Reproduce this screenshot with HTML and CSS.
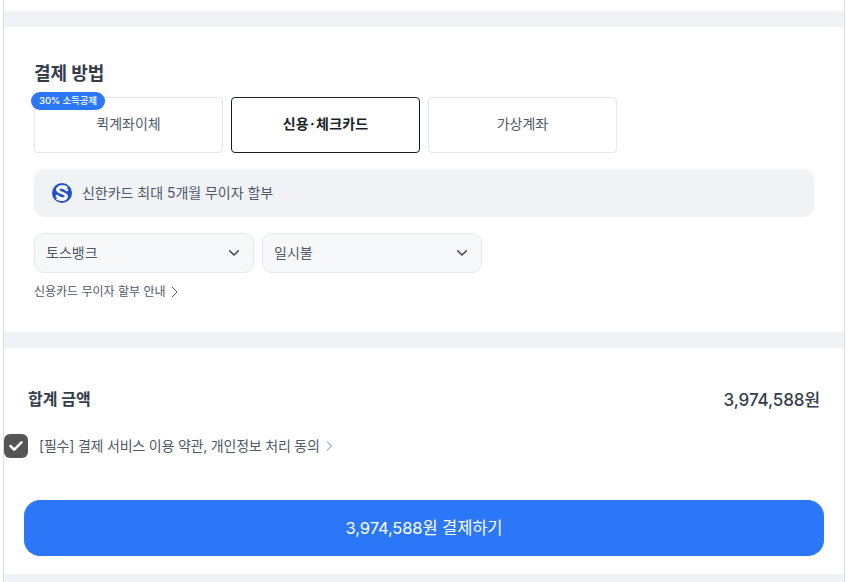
FILE: index.html
```html
<!DOCTYPE html>
<html lang="ko">
<head>
<meta charset="utf-8">
<title>결제 방법</title>
<link rel="stylesheet" href="styles.css">
</head>
<body>
<main class="frame">
  <div class="top-strip"></div>
  <section class="method">
    <h2 class="method-title">결제 방법</h2>
    <div class="tabs">
      <button class="tab">퀵계좌이체<span class="badge">30% 소득공제</span></button>
      <button class="tab tab-active">신용&#8202;·&#8202;체크카드</button>
      <button class="tab">가상계좌</button>
    </div>
    <div class="notice">
      <svg class="notice-icon" viewBox="0 0 20 20" width="20" height="20" aria-hidden="true">
        <circle cx="10" cy="10" r="10" fill="#2251c9"/>
        <path d="M16 3.800C13.500 1.800 8.200 1.500 5.600 3.700 3.200 5.800 3.800 8.400 6.400 9.800l5.500 2.500c1 .5 1 1.400.1 1.800-1.500.6-3.500 0-4.800-1.100l-3.300 3.300c2.600 2.100 8 2.400 10.500.2 2.400-2.100 1.800-5-.8-6.300L8.200 7.800c-1-.5-1-1.300-.1-1.800 1.400-.6 3.300-.1 4.500.9z" fill="#fff"/>
        <circle cx="14.800" cy="6.800" r="1.500" fill="#fff"/>
        <circle cx="5.200" cy="13.200" r="1.500" fill="#fff"/>
      </svg>
      <span class="lift">신한카드 최대 5개월 무이자 할부</span>
    </div>
    <div class="selects">
      <div class="select"><span class="lift">토스뱅크</span>
        <svg class="chevron" viewBox="0 0 10 6" width="10" height="6" aria-hidden="true"><path d="M.7.700L5 5l4.300-4.300" fill="none" stroke="#333d4b" stroke-width="1.400" stroke-linecap="round" stroke-linejoin="round"/></svg>
      </div>
      <div class="select"><span class="lift">일시불</span>
        <svg class="chevron" viewBox="0 0 10 6" width="10" height="6" aria-hidden="true"><path d="M.7.700L5 5l4.300-4.300" fill="none" stroke="#333d4b" stroke-width="1.400" stroke-linecap="round" stroke-linejoin="round"/></svg>
      </div>
    </div>
    <a class="guide"><span class="lift">신용카드 무이자 할부 안내</span>
      <svg viewBox="0 0 7 12" width="7" height="12" aria-hidden="true"><path d="M1 1l5 5-5 5" fill="none" stroke="#4e5968" stroke-width="1"/></svg>
    </a>
  </section>
  <section class="summary">
    <div class="total">
      <strong class="total-label">합계 금액</strong>
      <span class="total-value">3,974,588원</span>
    </div>
    <div class="agree">
      <span class="check">
        <svg viewBox="0 0 14 12" width="14" height="12" aria-hidden="true"><path d="M1.500 6l3.700 3.700 7.300-7.400" fill="none" stroke="#fff" stroke-width="2.500" stroke-linecap="round" stroke-linejoin="round"/></svg>
      </span>
      <span class="agree-text lift">[필수] 결제 서비스 이용 약관, 개인정보 처리 동의</span>
      <svg viewBox="0 0 7 12" width="7" height="12" aria-hidden="true"><path d="M1 1.500l4.500 4.500-4.500 4.500" fill="none" stroke="#adb5bd" stroke-width="1.300"/></svg>
    </div>
    <button class="pay">3,974,588원 결제하기</button>
  </section>
</main>
</body>
</html>
```
FILE: styles.css
```css
* { box-sizing: border-box; }
html, body { margin: 0; padding: 0; background: #fff; }
body {
  height: 582px;
  overflow: hidden;
  font-family: Inter, "Noto Sans CJK KR", sans-serif;
  color: #333d4b;
}
.frame {
  width: 842px;
  margin-left: 3px;
  height: 582px;
  border-left: 1px solid #d9dce3;
  border-right: 1px solid #d9dce3;
  background: #f0f2f6;
  display: flex;
  flex-direction: column;
  gap: 16px;
}
.top-strip { height: 11px; background: #fff; }
.lift { margin-bottom: 2px; }
.method {
  height: 305px;
  background: #fff;
  padding: 34px 30px 0;
}
.method-title {
  margin: 0;
  height: 26px;
  line-height: 26px;
  font-size: 18px;
  font-weight: 600;
  letter-spacing: -0.1px;
  color: #333d4b;
}
.tabs { display: flex; gap: 8px; margin-top: 10px; }
.tab {
  position: relative;
  width: 189px;
  height: 56px;
  padding: 0 0 5px;
  background: #fff;
  border: 1px solid #e3e5e9;
  border-radius: 4px;
  font: 400 14px Inter, "Noto Sans CJK KR", sans-serif;
  color: #4e5968;
}
.tab-active {
  border-color: #191f28;
  color: #191f28;
  font-weight: 700;
  letter-spacing: 0.15px;
}
.badge {
  position: absolute;
  left: -4px;
  top: -6px;
  height: 18px;
  width: 74px;
  border-radius: 9px;
  background: #2b77f7;
  color: #fff;
  font-size: 9.500px;
  font-weight: 500;
  letter-spacing: -0.15px;
  line-height: 18px;
  text-align: center;
}
.notice {
  margin-top: 16px;
  width: 780px;
  height: 48px;
  border-radius: 10px;
  background: #f0f2f6;
  padding-left: 18px;
  display: flex;
  align-items: center;
  gap: 10px;
  font-size: 14px;
  letter-spacing: -0.03px;
  color: #4e5968;
}
.selects { display: flex; gap: 8px; margin-top: 16px; }
.select {
  width: 220px;
  height: 40px;
  padding: 0 14px 0 11px;
  border: 1px solid #e5e8eb;
  border-radius: 10px;
  background: #f7f8fa;
  display: flex;
  align-items: center;
  justify-content: space-between;
  font-size: 14px;
  color: #4e5968;
}
.guide {
  margin-top: 10px;
  display: flex;
  align-items: center;
  gap: 5px;
  height: 17px;
  font-size: 12px;
  color: #4e5968;
}
.summary {
  flex: none;
  height: 226px;
  background: #fff;
  padding: 37px 20px 0;
}
.total {
  display: flex;
  justify-content: space-between;
  align-items: center;
  height: 26px;
  padding: 0 4px;
}
.total-label { font-size: 16px; font-weight: 700; color: #333d4b; }
.total-value { font-size: 17px; font-weight: 500; letter-spacing: -0.1px; color: #333d4b; }
.agree {
  display: flex;
  align-items: center;
  margin: 23px 0 0 -20px;
  height: 24px;
  font-size: 14px;
  letter-spacing: -0.2px;
  color: #4e5968;
}
.check {
  width: 24px;
  height: 24px;
  border-radius: 6px;
  background: #555;
  display: flex;
  align-items: center;
  justify-content: center;
}
.agree-text { margin: 0 6px 2px 11px; }
.pay {
  display: block;
  width: 800px;
  height: 56px;
  margin-top: 42px;
  padding: 0 0 3px;
  border: 0;
  border-radius: 16px;
  background: #2b77f7;
  color: #fff;
  font: 400 16.500px Inter, "Noto Sans CJK KR", sans-serif;
  letter-spacing: -0.1px;
}
```
